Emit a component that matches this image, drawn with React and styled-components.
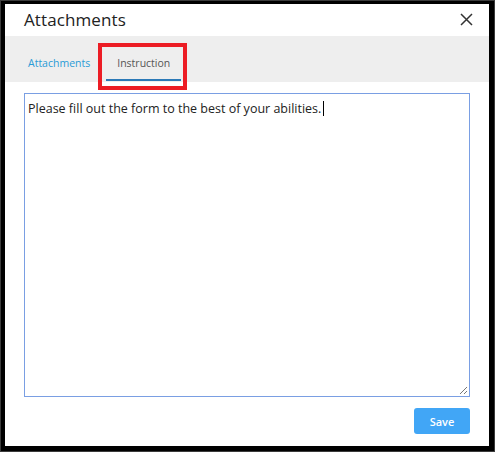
import React from 'react'
import styled, { createGlobalStyle } from 'styled-components'

const GlobalStyle = createGlobalStyle`
  html, body {
    margin: 0;
    padding: 0;
    background: #3c3c3c;
  }
  body {
    font-family: "Open Sans", "Noto Sans", "Liberation Sans", sans-serif;
  }
`

const Frame = styled.div`
  width: 495px;
  height: 452px;
  box-sizing: border-box;
  padding: 1px;
  background: #3c3c3c;
`

const Dialog = styled.div`
  height: 100%;
  box-sizing: border-box;
  border-style: solid;
  border-color: #000;
  border-width: 3px 5px 5px 4px;
  background: #fff;
  display: flex;
  flex-direction: column;
`

const Header = styled.div`
  height: 32px;
  display: flex;
  align-items: center;
  justify-content: space-between;
  padding: 0 16px 0 19px;
`

const Title = styled.h2`
  margin: 0;
  font-size: 17px;
  font-weight: 400;
  color: #222;
  letter-spacing: 0.1px;
`

const CloseButton = styled.button`
  border: 0;
  background: none;
  padding: 0;
  width: 13px;
  height: 13px;
  display: flex;
  cursor: pointer;
`

const TabBar = styled.div`
  position: relative;
  height: 46px;
  background: #eeeeee;
  display: flex;
  align-items: flex-end;
  padding: 0 0 1px 16px;
  gap: 9px;
`

const Tab = styled.button`
  border: 0;
  background: none;
  height: 38px;
  padding: 3px ${(p) => (p.$active ? '11px' : '7px')} 0;
  font-family: inherit;
  font-size: 10.5px;
  color: ${(p) => (p.$active ? '#555' : '#2a9bd6')};
  border-bottom: 2px solid ${(p) => (p.$active ? '#2b79b7' : 'transparent')};
  box-sizing: border-box;
  cursor: pointer;
`

const Highlight = styled.div`
  position: absolute;
  left: 93px;
  top: 7px;
  width: 89px;
  height: 47px;
  box-sizing: border-box;
  border: 4px solid #ec1c24;
  pointer-events: none;
  z-index: 2;
`

const Body = styled.div`
  flex: 1;
  display: flex;
  flex-direction: column;
  padding: 11px 19px 12px 19px;
`

const Editor = styled.div`
  position: relative;
  height: 304px;
  box-sizing: border-box;
  border: 1px solid #7a9fe3;
  padding: 7px 3px;
  font-size: 12.5px;
  color: #222;
  line-height: 16px;
`

const Caret = styled.span`
  display: inline-block;
  width: 1px;
  height: 15px;
  margin-left: 2px;
  vertical-align: -3px;
  background: #000;
`

const Grip = styled.svg`
  position: absolute;
  right: 1px;
  bottom: 1px;
`

const Footer = styled.div`
  display: flex;
  justify-content: flex-end;
  padding-top: 11px;
`

const SaveButton = styled.button`
  width: 56px;
  height: 26px;
  border: 0;
  border-radius: 3px;
  background: #41a6f6;
  color: #fff;
  font-family: inherit;
  font-size: 11px;
  font-weight: 600;
  cursor: pointer;
`

export default function App() {
  return (
    <>
      <GlobalStyle />
      <Frame>
        <Dialog>
          <Header>
            <Title>Attachments</Title>
            <CloseButton aria-label="Close">
              <svg width="13" height="13" viewBox="0 0 13 13">
                <path d="M1 1 L12 12 M12 1 L1 12" stroke="#333" strokeWidth="1.5" />
              </svg>
            </CloseButton>
          </Header>
          <TabBar>
            <Tab>Attachments</Tab>
            <Tab $active>Instruction</Tab>
            <Highlight />
          </TabBar>
          <Body>
            <Editor>
              Please fill out the form to the best of your abilities.
              <Caret />
              <Grip width="10" height="10" viewBox="0 0 10 10">
                <path d="M9 2 L2 9 M9 6 L6 9" stroke="#777" strokeWidth="1" />
              </Grip>
            </Editor>
            <Footer>
              <SaveButton>Save</SaveButton>
            </Footer>
          </Body>
        </Dialog>
      </Frame>
    </>
  )
}
